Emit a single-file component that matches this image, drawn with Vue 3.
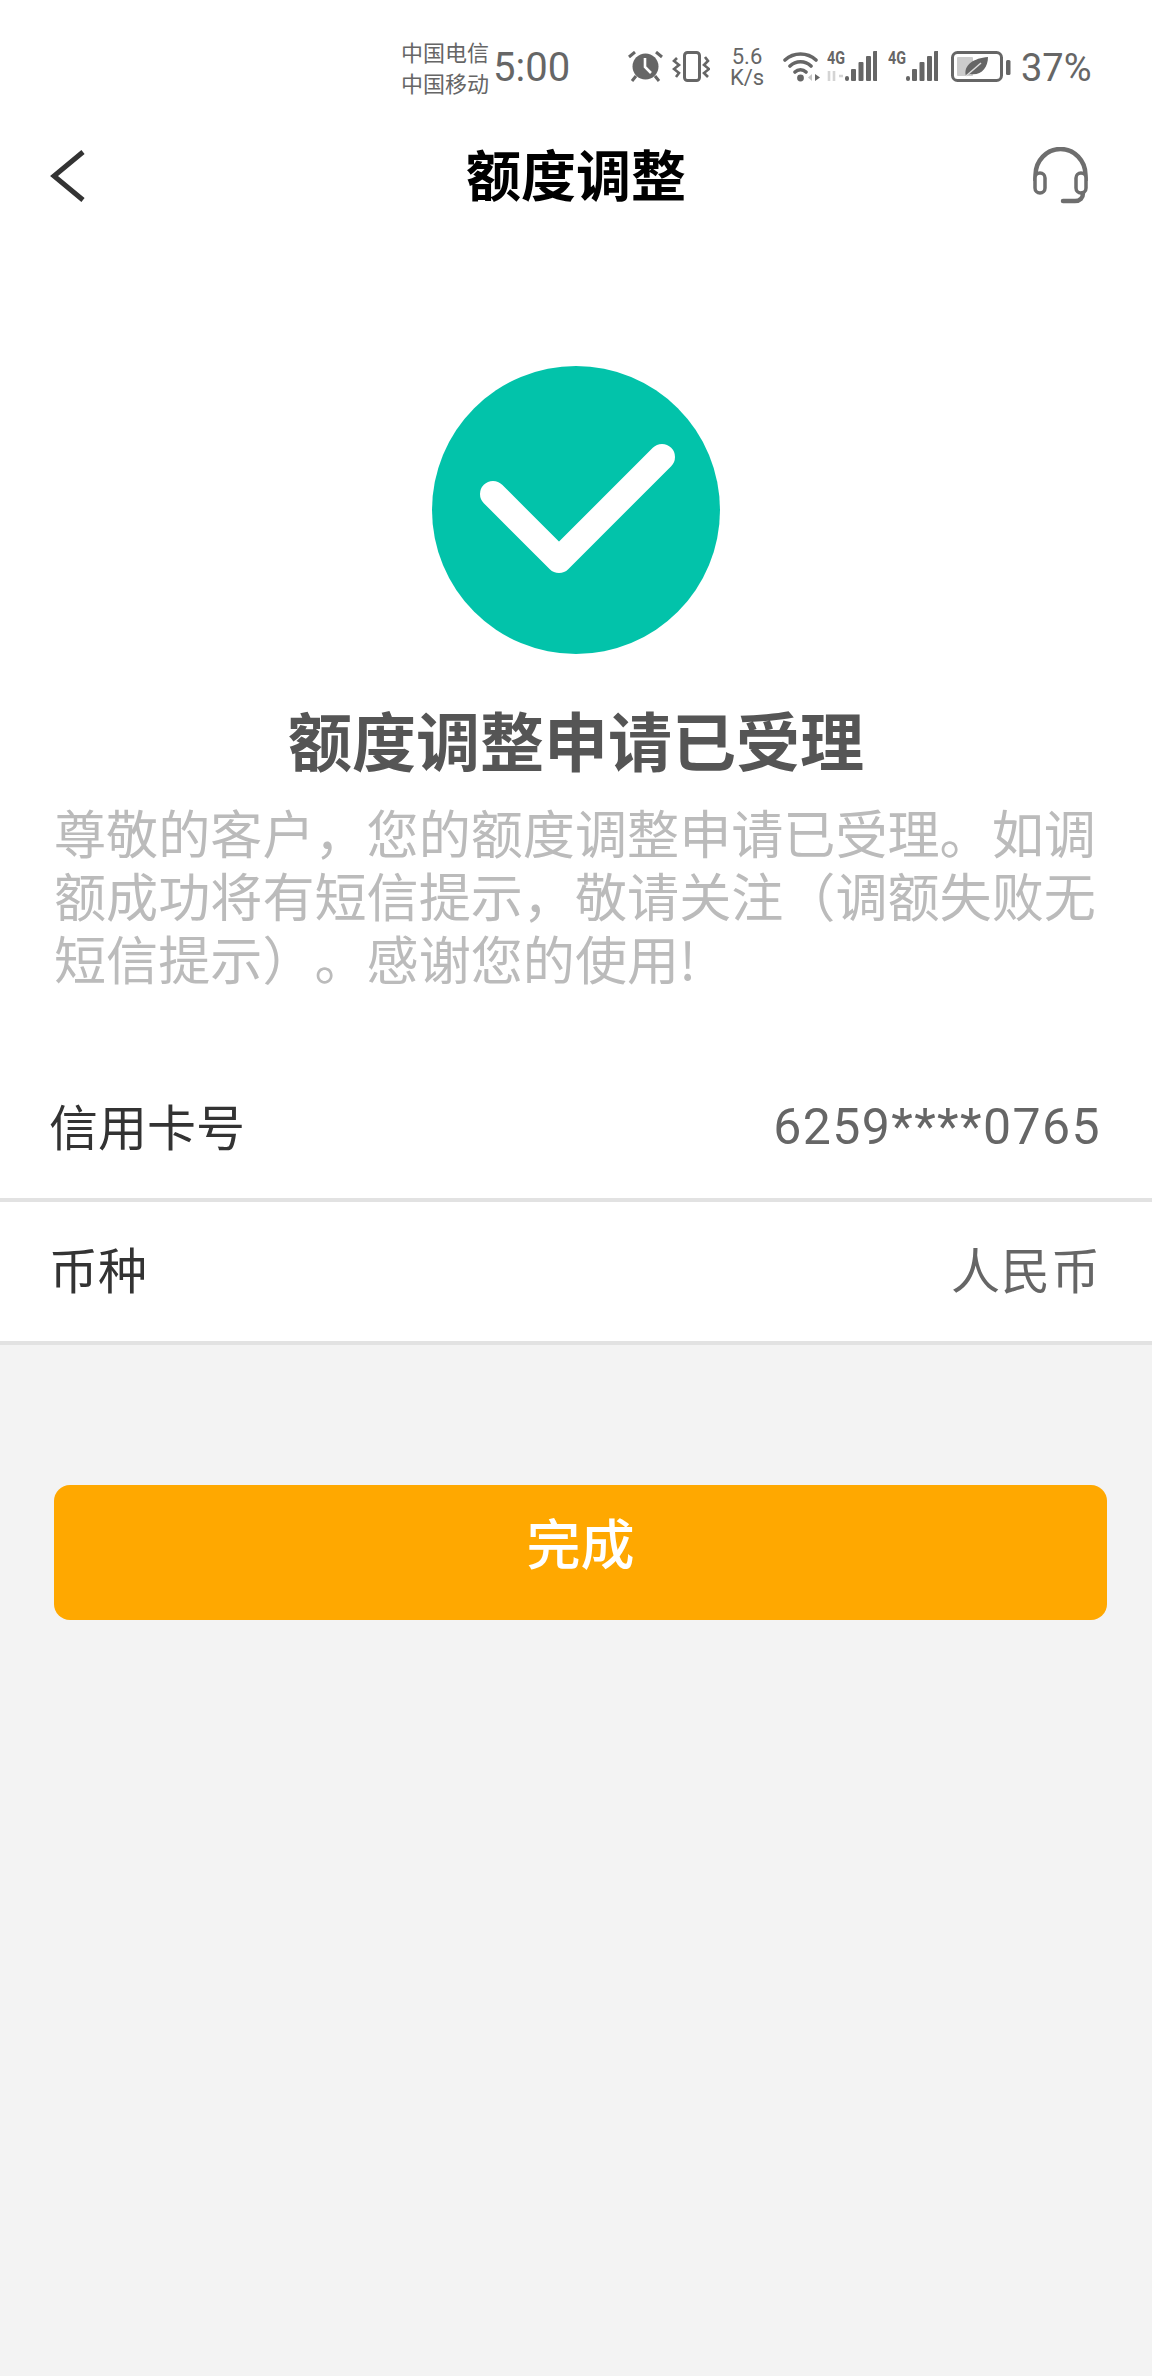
<template>
  <div class="page">
    <div class="top">
      <div class="status">
        <div class="carrier">
          <span>中国电信</span>
          <span>中国移动</span>
        </div>
        <span class="time">5:00</span>
        <svg class="alarm" width="36" height="32" viewBox="0 0 36 32">
          <circle cx="17.500" cy="15.500" r="13" fill="#666" />
          <path d="M17 7v9l6 6" fill="none" stroke="#fff" stroke-width="2.600" />
          <path d="M1 6l6-5M34 6l-6-5M8 25l-4 5M27 25l4 5" fill="none" stroke="#666" stroke-width="3" />
        </svg>
        <svg class="vibrate" width="38" height="32" viewBox="0 0 38 32">
          <rect x="12.500" y="1.500" width="15" height="28" rx="3" fill="none" stroke="#666" stroke-width="3" />
          <path d="M5 7L2 10l5 4-5 4 5 4-3 4M33 6l3 4-4 4 5 4-5 4 4 4" fill="none" stroke="#666" stroke-width="2.600" />
        </svg>
        <div class="speed">
          <span>5.6</span>
          <span>K/s</span>
        </div>
        <svg class="wifi" width="38" height="32" viewBox="0 0 38 32">
          <path d="M2 9a23 23 0 0 1 31 0M7 15a15 15 0 0 1 21 0M12 21a8 8 0 0 1 11 0" fill="none" stroke="#666" stroke-width="3.600" stroke-linecap="round" />
          <circle cx="17.500" cy="27" r="3.400" fill="#666" />
          <path d="M29 23v7l-4-3.500z" fill="#c4c4c4" />
          <path d="M32 23v7l5-3.500z" fill="#666" />
        </svg>
        <svg class="sig sig-a" width="50" height="40" viewBox="0 -8 50 40">
          <text x="0" y="13" class="net" textLength="18" lengthAdjust="spacingAndGlyphs">4G</text>
          <path d="M2 20v10M7 20v10M12 25h4" stroke="#d4d4d4" stroke-width="2.600" />
          <g fill="#666">
            <rect x="18" y="25" width="4" height="5" rx="2" />
            <rect x="24" y="18" width="5" height="12" rx="1" />
            <rect x="31.500" y="11" width="5" height="19" rx="1" />
            <rect x="39" y="5" width="5" height="25" rx="1" />
            <rect x="46" y="0" width="4.500" height="30" rx="1" />
          </g>
        </svg>
        <svg class="sig sig-b" width="50" height="40" viewBox="0 -8 50 40">
          <text x="0" y="13" class="net" textLength="18" lengthAdjust="spacingAndGlyphs">4G</text>
          <g fill="#666">
            <rect x="18" y="25" width="4" height="5" rx="2" />
            <rect x="24" y="18" width="5" height="12" rx="1" />
            <rect x="31.500" y="11" width="5" height="19" rx="1" />
            <rect x="39" y="5" width="5" height="25" rx="1" />
            <rect x="46" y="0" width="4.500" height="30" rx="1" />
          </g>
        </svg>
        <svg class="battery" width="60" height="32" viewBox="0 0 60 32">
          <rect x="1.500" y="1.500" width="49" height="28" rx="5" fill="none" stroke="#666" stroke-width="3" />
          <rect x="6" y="6" width="16" height="19" rx="1" fill="#ccc" />
          <path d="M15 25C12 14 23 7 37 6 37 17 30 25 19 23z" fill="#666" />
          <path d="M15 25L30 12" stroke="#ddd" stroke-width="1.500" />
          <rect x="55" y="9" width="4.500" height="15" rx="1.500" fill="#666" />
        </svg>
        <span class="percent">37%</span>
      </div>
      <div class="nav">
        <svg class="back" width="36" height="52" viewBox="0 0 36 52">
          <path d="M33 2L4 26l29 24" fill="none" stroke="#333" stroke-width="5" />
        </svg>
        <h1>额度调整</h1>
        <svg class="headset" width="58" height="58" viewBox="0 0 58 58">
          <path d="M3.500 34V28a25 26 0 0 1 50 0v6" fill="none" stroke="#6e6e6e" stroke-width="4.500" />
          <rect x="3" y="26" width="10" height="20" rx="5" fill="#fff" stroke="#6e6e6e" stroke-width="3.500" />
          <rect x="44" y="26" width="10" height="20" rx="5" fill="#fff" stroke="#6e6e6e" stroke-width="3.500" />
          <path d="M51 46c0 5-3 8-8 8H31" fill="none" stroke="#6e6e6e" stroke-width="4.500" stroke-linecap="round" />
        </svg>
      </div>
      <div class="result">
        <svg width="288" height="288" viewBox="0 0 288 288">
          <circle cx="144" cy="144" r="144" fill="#02c3aa" />
          <path d="M61 128l66 66 103-103" fill="none" stroke="#fff" stroke-width="26" stroke-linecap="round" stroke-linejoin="round" />
        </svg>
        <h2>额度调整申请已受理</h2>
        <p>尊敬的客户，您的额度调整申请已受理。如调额成功将有短信提示，敬请关注（调额失败无短信提示）。感谢您的使用!</p>
      </div>
      <div v-for="row in rows" :key="row.label" class="row">
        <span class="label">{{ row.label }}</span>
        <span class="value" :class="{ digits: row.digits }">{{ row.value }}</span>
      </div>
    </div>
    <button class="done">完成</button>
  </div>
</template>

<script setup>
const rows = [
  { label: '信用卡号', value: '6259****0765', digits: true },
  { label: '币种', value: '人民币' },
];
</script>

<style>
html,
body {
  margin: 0;
  background: #f3f3f3;
}
</style>

<style scoped>
.page {
  height: 2376px;
  background: #f3f3f3;
  font-family: "Noto Sans CJK SC", "Noto Sans", sans-serif;
  overflow: hidden;
}

.top {
  background: #fff;
}

.status {
  height: 134px;
  display: flex;
  align-items: center;
  padding-left: 401px;
  color: #666;
  box-sizing: border-box;
}

.carrier {
  display: flex;
  flex-direction: column;
  font-size: 22px;
  line-height: 31px;
  width: 92px;
}

.time,
.percent {
  font-family: Roboto, sans-serif;
  font-size: 38px;
  line-height: 40px;
  margin-top: 2px;
}

.time {
  font-size: 40px;
  width: 77px;
}

.alarm {
  margin-left: 58px;
}

.vibrate {
  margin-left: 8px;
}

.speed {
  display: flex;
  flex-direction: column;
  align-items: center;
  width: 36px;
  margin-left: 19px;
  font-family: Roboto, sans-serif;
  font-size: 22px;
  line-height: 21px;
}

.wifi {
  margin-left: 18px;
}

.sig {
  margin-top: -8px;
}

.sig-a {
  margin-left: 6px;
}

.sig-b {
  margin-left: 11px;
}

.net {
  font-family: Roboto, sans-serif;
  font-size: 18px;
  font-weight: 700;
  fill: #666;
}

.battery {
  margin-left: 13px;
}

.percent {
  margin-left: 10px;
}

.nav {
  height: 84px;
  display: grid;
  grid-template-columns: 1fr auto 1fr;
  align-items: center;
  padding: 0 62px;
}

.back {
  margin-left: -12px;
}

.nav h1 {
  margin: 0 0 8px;
  font-size: 55px;
  line-height: 76px;
  font-weight: 700;
  color: #000;
}

.headset {
  justify-self: end;
}

.result {
  padding: 148px 54px 70px;
  display: flex;
  flex-direction: column;
  align-items: center;
}

.result svg {
  display: block;
}

.result h2 {
  margin: 41px 0 0;
  font-size: 64px;
  line-height: 86px;
  font-weight: 700;
  color: #555;
  white-space: nowrap;
}

.result p {
  margin: 19px 0 0;
  font-size: 52.100px;
  line-height: 63px;
  color: #bbb;
  text-spacing-trim: space-all;
}

.row {
  height: 139px;
  display: flex;
  justify-content: space-between;
  align-items: center;
  padding: 0 51px 0 49px;
  border-bottom: 4px solid #e2e2e2;
}

.label,
.value {
  margin-bottom: 8px;
}

.label {
  font-size: 49px;
  color: #333;
}

.value {
  font-size: 49px;
  color: #666;
  letter-spacing: 1px;
}

.digits {
  margin-bottom: 4px;
  font-family: Roboto, sans-serif;
  font-size: 50px;
  letter-spacing: 1.400px;
}

.done {
  display: block;
  width: 1053px;
  height: 135px;
  margin: 140px 0 0 54px;
  padding: 0 0 23px;
  border: none;
  border-radius: 16px;
  background: #ffa800;
  color: #fff;
  font-family: inherit;
  font-size: 54px;
  font-weight: 500;
}
</style>
